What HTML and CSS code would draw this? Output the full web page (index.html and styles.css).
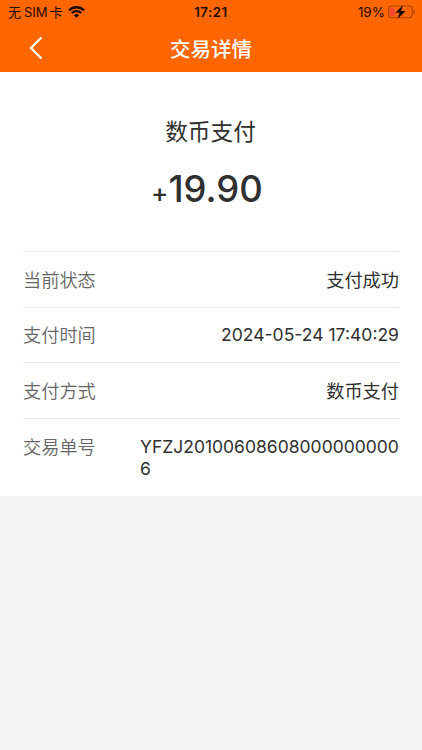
FILE: index.html
```html
<!DOCTYPE html>
<html lang="zh-CN">

<head>
    <title>交易详情</title>
    <meta charset="utf-8">
    <meta name="viewport" content="width=device-width, initial-scale=1.0">
    <link rel="stylesheet" href="styles.css">
</head>

<body>
    <div class="header">
        <div class="status-bar">
            <div class="status-left">
                <span class="carrier">无<span class="carrier-sim">SIM</span>卡</span>
                <svg class="wifi" width="17" height="12" viewBox="0 0 17 12">
                    <path d="M1 4.3a10.8 10.8 0 0 1 15 0M3.7 7a7 7 0 0 1 9.6 0" fill="none" stroke="#1f0c00" stroke-width="2.3" />
                    <path d="M8.5 11.8L5.9 9.2a3.8 3.8 0 0 1 5.2 0z" fill="#1f0c00" />
                </svg>
            </div>
            <div class="status-time">17:21</div>
            <div class="status-right">
                <span class="percent">19%</span>
                <svg class="battery" width="28" height="14" viewBox="0 0 28 14">
                    <rect x="0.6" y="1" width="23.6" height="11.8" rx="3.2" fill="none" stroke="#a64100" stroke-width="1.1" />
                    <rect x="2.2" y="2.7" width="4.4" height="8.4" rx="1.4" fill="#ff4438" />
                    <path d="M25.6 4.8v4.2q1.5-.6 1.5-2.1t-1.5-2.1z" fill="#a64100" />
                    <path d="M14.8 0.3L7.3 7.8h4.2L9.8 13.7l7.8-7.6h-4.4z" fill="#160800" />
                </svg>
            </div>
        </div>
        <div class="nav-bar">
            <svg class="back" width="14" height="24" viewBox="0 0 14 24">
                <path d="M12 2L2 12l10 10" fill="none" stroke="#fff" stroke-width="2.3" stroke-linecap="round" />
            </svg>
            <h1 class="nav-title">交易详情</h1>
        </div>
    </div>

    <div class="container">
        <div class="summary">
            <h2 class="summary-title">数币支付</h2>
            <div class="amount"><span class="amount-sign">+</span>19.90</div>
        </div>
        <div class="row">
            <div class="label">当前状态</div>
            <div class="value">支付成功</div>
        </div>
        <div class="row">
            <div class="label">支付时间</div>
            <div class="value value-date">2024-05-24 17:40:29</div>
        </div>
        <div class="row">
            <div class="label">支付方式</div>
            <div class="value">数币支付</div>
        </div>
        <div class="row">
            <div class="label">交易单号</div>
            <div class="value value-order">YFZJ201006086080000000006</div>
        </div>
    </div>
</body>

</html>
```

FILE: styles.css
```css
* {
    box-sizing: border-box;
}

body {
    margin: 0;
    min-height: 100vh;
    background: #f5f5f5;
    font-family: 'Inter', 'Noto Sans CJK SC', sans-serif;
    color: #303030;
}

.header {
    height: 72px;
    background: #ff6600;
}

.status-bar {
    display: grid;
    grid-template-columns: 1fr auto 1fr;
    height: 24px;
    padding: 0 6px 0 8px;
    line-height: 24px;
    color: #1f0c00;
}

.status-left,
.status-right {
    display: flex;
    align-items: center;
}

.status-right {
    justify-content: flex-end;
}

.carrier {
    font-size: 13px;
    white-space: nowrap;
}

.carrier-sim {
    margin: 0 2px 0 3px;
}

.wifi {
    margin-left: 5px;
}

.status-time {
    padding-right: 2px;
    font-size: 13.3px;
    font-weight: 600;
    letter-spacing: 0.5px;
}

.percent {
    font-size: 13.5px;
}

.battery {
    margin-left: 3px;
}

.nav-bar {
    display: grid;
    grid-template-columns: 1fr auto 1fr;
    align-items: center;
    height: 48px;
    padding: 0 29px;
}

.nav-title {
    margin: 0;
    padding-top: 4px;
    font-size: 20.5px;
    line-height: 44px;
    font-weight: 500;
    color: #fff;
}

.container {
    height: 424px;
    padding: 0 23px;
    background: #fff;
}

.summary {
    height: 179px;
    padding-top: 43px;
    text-align: center;
}

.summary-title {
    margin: 0;
    padding-right: 1px;
    font-size: 22.7px;
    line-height: 34px;
    font-weight: 400;
}

.amount {
    margin-top: 17px;
    padding-right: 8px;
    font-size: 36.5px;
    line-height: 46px;
    font-weight: 500;
}

.amount-sign {
    font-size: 26px;
}

.row {
    display: flex;
    justify-content: space-between;
    height: 55.7px;
    padding-top: 16.6px;
    border-top: 1px solid #e9e9eb;
    font-size: 18.2px;
    line-height: 23px;
}

.label {
    font-weight: 350;
    color: #666;
}

.value-date {
    font-size: 17.55px;
    line-height: 21px;
}

.value-order {
    width: 259px;
    font-size: 17.5px;
    line-height: 22px;
    word-break: break-all;
}
```
